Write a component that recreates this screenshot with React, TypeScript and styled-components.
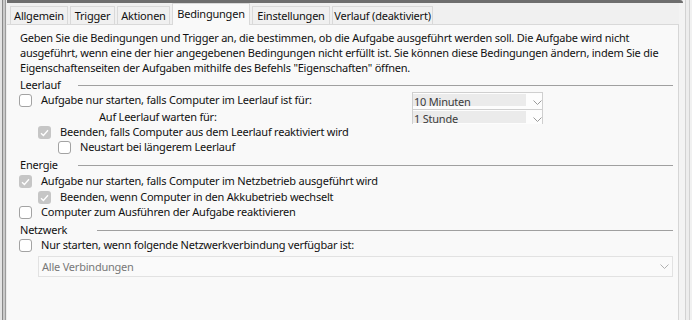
import React from 'react';
import styled, { createGlobalStyle } from 'styled-components';

const Global = createGlobalStyle`
  html, body { margin: 0; padding: 0; background: #f9f9f9; }
  body {
    font-family: "Noto Sans", "Open Sans", sans-serif;
    font-size: 11px;
    letter-spacing: -0.22px;
    color: #111;
  }
  #root { width: 692px; height: 320px; }
`;

const Window = styled.div`
  width: 692px;
  height: 320px;
  display: flex;
  overflow: hidden;
  background: #f9f9f9;
`;

const LeftEdge = styled.div`
  width: 7px;
  flex: none;
  background: linear-gradient(
    to right,
    #e4e4e4 0 2px,
    #8a8a8a 2px 3px,
    #cacaca 3px 5px,
    #9c9c9c 5px 6px,
    #ececec 6px 7px
  );
`;

const RightEdge = styled.div`
  width: 9px;
  flex: none;
  background: linear-gradient(
    to right,
    #f3f3f3 0 2px,
    #d2d2d2 2px 3px,
    #ededed 3px 6px,
    #d2d2d2 6px 7px,
    #f1f1f1 7px 9px
  );
`;

const Main = styled.div`
  flex: 1;
  min-width: 0;
  display: flex;
  flex-direction: column;
  background: #f3f3f3;
`;

const TopBar = styled.div`
  height: 3px;
  flex: none;
  background: #6e6e6e;
  border-top-right-radius: 3px;
`;

const TabStrip = styled.div`
  height: 22px;
  flex: none;
  display: flex;
  align-items: flex-end;
  gap: 2px;
  padding-left: 3px;
  background: #f0f0f0;
  box-shadow: inset 0 -1px 0 #d9d9d9;
  margin-right: 4px;
`;

const Tab = styled.div<{ $w: number; $active?: boolean }>`
  width: ${p => p.$w}px;
  height: ${p => (p.$active ? 22 : 19)}px;
  box-sizing: border-box;
  display: flex;
  align-items: center;
  justify-content: center;
  white-space: nowrap;
  color: #111;
  background: ${p => (p.$active ? '#f9f9f9' : '#f0f0f0')};
  border: 1px solid #d9d9d9;
  border-bottom: ${p => (p.$active ? 'none' : '1px solid #d9d9d9')};
  padding-bottom: ${p => (p.$active ? 3 : 0)}px;
`;

const Panel = styled.div`
  flex: 1;
  margin-right: 4px;
  background: #f9f9f9;
  border-right: 1px solid #d6d6d6;
  padding: 5px 5px 0 12px;
  display: flex;
  flex-direction: column;
`;

const Description = styled.p`
  margin: 0 0 1px 1px;
  line-height: 15px;
  white-space: nowrap;
`;

const Header = styled.div<{ $labelWidth: number; $h: number }>`
  height: ${p => p.$h}px;
  display: flex;
  align-items: center;
  & > span {
    width: ${p => p.$labelWidth}px;
    flex: none;
    padding-left: 1px;
    box-sizing: border-box;
  }
  &::after {
    content: '';
    flex: 1;
    height: 1px;
    margin-top: 2px;
    background: #a0a0a0;
  }
`;

const Row = styled.div<{ $h: number; $indent?: number }>`
  height: ${p => p.$h}px;
  display: flex;
  align-items: flex-start;
  padding-left: ${p => p.$indent ?? 0}px;
  line-height: 16px;
  white-space: nowrap;
`;

const ComboRow = styled.div<{ $h: number }>`
  height: ${p => p.$h}px;
  display: grid;
  grid-template-columns: 393px 131px;
  line-height: 16px;
  white-space: nowrap;
`;

const Item = styled.label`
  display: flex;
  align-items: flex-start;
  gap: 9px;
`;

const PlainLabel = styled.span<{ $indent: number }>`
  padding-left: ${p => p.$indent}px;
`;

const Box = styled.span<{ $checked?: boolean }>`
  width: 13px;
  height: 13px;
  margin-top: 2px;
  box-sizing: border-box;
  flex: none;
  border-radius: 3px;
  display: flex;
  align-items: center;
  justify-content: center;
  background: ${p => (p.$checked ? '#c6c6c6' : '#ffffff')};
  border: ${p => (p.$checked ? 'none' : '1px solid #a3a3a3')};
`;

const Combo = styled.div<{ $h: number }>`
  height: ${p => p.$h}px;
  box-sizing: border-box;
  border: 1px solid #cfcfcf;
  border-bottom: none;
  background: #fdfdfd;
  display: flex;
  overflow: hidden;
`;

const ComboText = styled.div`
  width: 112px;
  height: 12px;
  margin-top: 1px;
  background: #ebebeb;
  color: #3c3c3c;
  line-height: 15px;
  padding-left: 1px;
`;

const ComboArrow = styled.div`
  flex: 1;
  display: flex;
  align-items: center;
  justify-content: center;
  padding-top: 2px;
  padding-left: 6px;
  align-self: flex-start;
  height: 14px;
`;

const NetCombo = styled.div`
  margin-left: 19px;
  height: 21px;
  box-sizing: border-box;
  border: 1px solid #e2e2e2;
  background: #fafafa;
  display: flex;
  align-items: center;
  justify-content: space-between;
  padding: 0 3px 0 3px;
  color: #787878;
`;

const Chevron = ({ color = '#9a9a9a' }: { color?: string }) => (
  <svg width="9" height="5" viewBox="0 0 9 5">
    <polyline points="0.5,0.5 4.5,4.5 8.5,0.5" fill="none" stroke={color} strokeWidth="1" />
  </svg>
);

const Check = ({ checked }: { checked?: boolean }) => (
  <Box $checked={checked}>
    {checked && (
      <svg width="9" height="8" viewBox="0 0 9 8">
        <polyline points="1,4.2 3.4,6.5 8,1.3" fill="none" stroke="#ffffff" strokeWidth="1.3" />
      </svg>
    )}
  </Box>
);

const tabs = [
  { label: 'Allgemein', w: 58 },
  { label: 'Trigger', w: 45 },
  { label: 'Aktionen', w: 53 },
  { label: 'Bedingungen', w: 78, active: true },
  { label: 'Einstellungen', w: 78 },
  { label: 'Verlauf (deaktiviert)', w: 101 },
];

export default function App() {
  return (
    <>
      <Global />
      <Window>
        <LeftEdge />
        <Main>
          <TopBar />
          <TabStrip>
            {tabs.map(t => (
              <Tab key={t.label} $w={t.w} $active={t.active}>
                {t.label}
              </Tab>
            ))}
          </TabStrip>
          <Panel>
            <Description>
              Geben Sie die Bedingungen und Trigger an, die bestimmen, ob die Aufgabe ausgeführt werden soll. Die Aufgabe wird nicht
              <br />
              ausgeführt, wenn eine der hier angegebenen Bedingungen nicht erfüllt ist. Sie können diese Bedingungen ändern, indem Sie die
              <br />
              Eigenschaftenseiten der Aufgaben mithilfe des Befehls "Eigenschaften" öffnen.
            </Description>

            <Header $labelWidth={59} $h={16}>
              <span>Leerlauf</span>
            </Header>
            <ComboRow $h={17}>
              <Item>
                <Check />
                Aufgabe nur starten, falls Computer im Leerlauf ist für:
              </Item>
              <Combo $h={17}>
                <ComboText>10 Minuten</ComboText>
                <ComboArrow>
                  <Chevron />
                </ComboArrow>
              </Combo>
            </ComboRow>
            <ComboRow $h={15}>
              <PlainLabel $indent={80}>Auf Leerlauf warten für:</PlainLabel>
              <Combo $h={15}>
                <ComboText>1 Stunde</ComboText>
                <ComboArrow>
                  <Chevron />
                </ComboArrow>
              </Combo>
            </ComboRow>
            <Row $h={15} $indent={19}>
              <Item>
                <Check checked />
                Beenden, falls Computer aus dem Leerlauf reaktiviert wird
              </Item>
            </Row>
            <Row $h={17} $indent={39}>
              <Item>
                <Check />
                Neustart bei längerem Leerlauf
              </Item>
            </Row>

            <Header $labelWidth={59} $h={17}>
              <span>Energie</span>
            </Header>
            <Row $h={16}>
              <Item>
                <Check checked />
                Aufgabe nur starten, falls Computer im Netzbetrieb ausgeführt wird
              </Item>
            </Row>
            <Row $h={15} $indent={19}>
              <Item>
                <Check checked />
                Beenden, wenn Computer in den Akkubetrieb wechselt
              </Item>
            </Row>
            <Row $h={17}>
              <Item>
                <Check />
                Computer zum Ausführen der Aufgabe reaktivieren
              </Item>
            </Row>

            <Header $labelWidth={78} $h={16}>
              <span>Netzwerk</span>
            </Header>
            <Row $h={19}>
              <Item>
                <Check />
                Nur starten, wenn folgende Netzwerkverbindung verfügbar ist:
              </Item>
            </Row>
            <NetCombo>
              <span>Alle Verbindungen</span>
              <Chevron color="#b0b0b0" />
            </NetCombo>
          </Panel>
        </Main>
        <RightEdge />
      </Window>
    </>
  );
}
